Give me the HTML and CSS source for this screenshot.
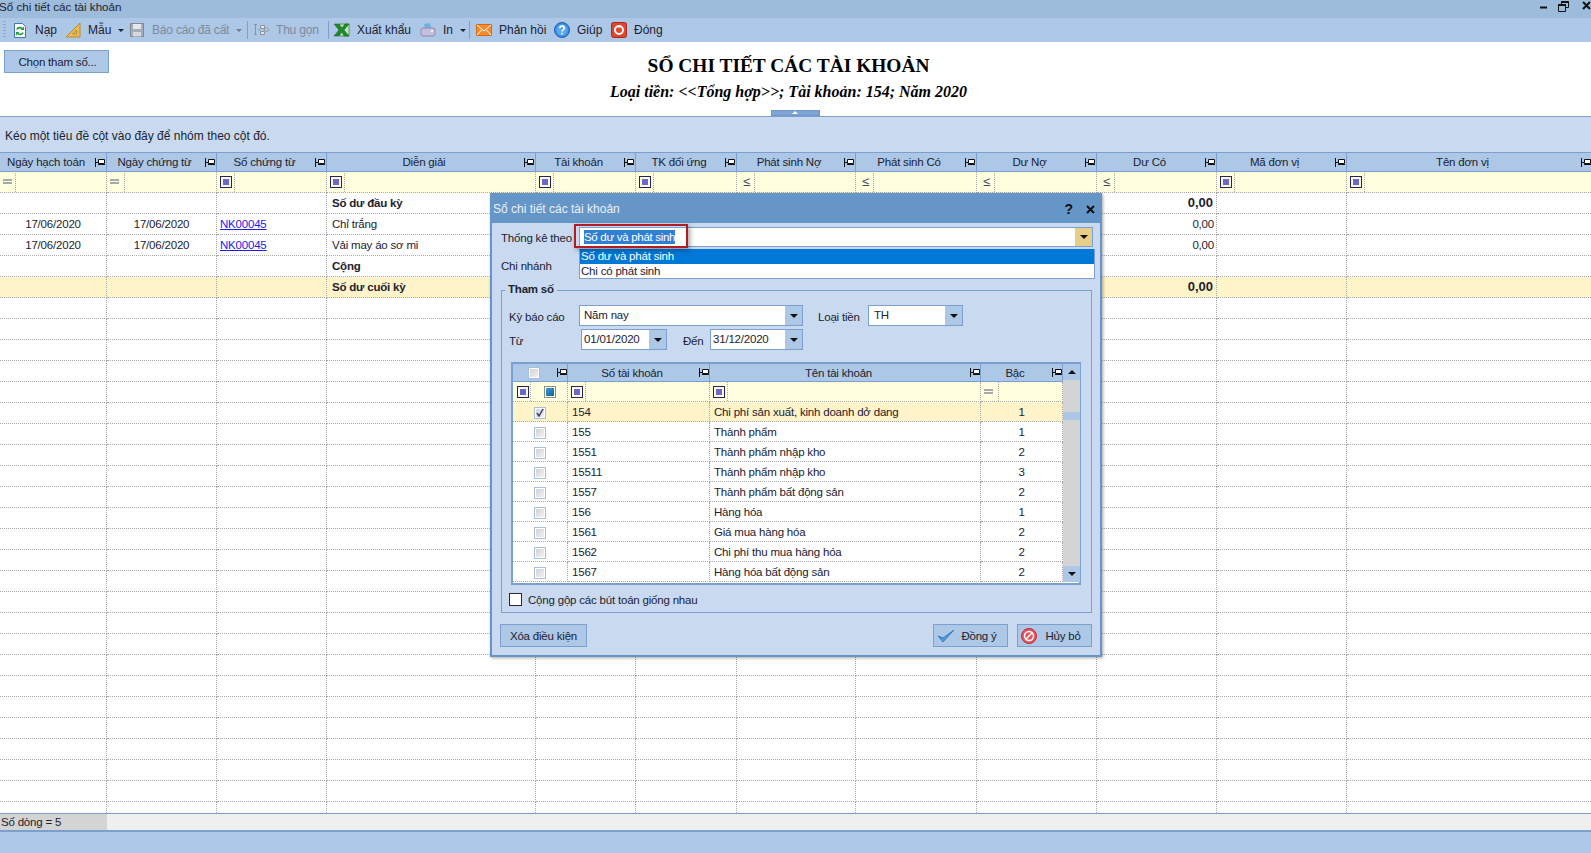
FILE: index.html
```html
<!DOCTYPE html>
<html lang="vi">
<head>
<meta charset="utf-8">
<title>Sổ chi tiết các tài khoản</title>
<link rel="stylesheet" href="styles.css">
</head>
<body>
<svg class="defs" width="0" height="0" aria-hidden="true">
  <symbol id="pin" viewBox="0 0 10 9"><path d="M.5 0v9M.5 4.500H3.500" stroke="#111" fill="none"/><path d="M3.500 1.500h6v4h-6z" fill="#fff" stroke="#111"/><path d="M3 6.500h7" stroke="#111"/></symbol>
  <symbol id="eq" viewBox="0 0 9 6"><path d="M0 1h9M0 4h9" stroke="#4c5570" fill="none"/></symbol>
</svg>

<header class="titlebar">
  <span class="app-title">Sổ chi tiết các tài khoản</span>
  <div class="winctl">
    <svg width="9" height="12" viewBox="0 0 9 12"><path d="M1 6.500h7" stroke="#111" stroke-width="2"/></svg>
    <svg width="11" height="11" viewBox="0 0 11 11"><path d="M3.500 3V.5h7v6H8M.5 3.500h7v7h-7z" fill="none" stroke="#111"/><path d="M.5 4h7M3.500 1h7" stroke="#111" stroke-width="2"/></svg>
    <svg width="9" height="9" viewBox="0 0 9 9"><path d="M1 1l7 7M8 1L1 8" stroke="#111" stroke-width="2"/></svg>
  </div>
</header>

<nav class="toolbar">
  <span class="grip"></span>
  <div class="tool tool-nap"><svg width="14" height="17" viewBox="0 0 14 17"><path d="M1.500 1.500h8l3 3v11h-11z" fill="#fff" stroke="#3f74ad"/><path d="M4 7.500a3 3 0 0 1 5-1" fill="none" stroke="#1f9a3a" stroke-width="1.700"/><path d="M7.500 8h3.500V4.500z" fill="#1f9a3a"/><path d="M10 10.500a3 3 0 0 1-5 1" fill="none" stroke="#1f9a3a" stroke-width="1.700"/><path d="M6.500 10H3v3.500z" fill="#1f9a3a"/></svg><span>Nạp</span></div>
  <div class="tool"><svg width="16" height="16" viewBox="0 0 16 16"><path d="M15 1v14H1z" fill="#eebc4e" stroke="#b98a2c"/><path d="M11.500 8v4H7.500z" fill="#adc7e6" stroke="#b98a2c"/></svg><span>Mẫu</span><i class="caret"></i></div>
  <div class="tool off"><svg width="16" height="16" viewBox="0 0 16 16"><path d="M1.500 1.500h13v13h-13z" fill="#a4adb8" stroke="#7e8792"/><path d="M4 2h8v5H4z" fill="#e6e8eb"/><path d="M4 10h8v4.500H4z" fill="#d5d8dc"/></svg><span>Báo cáo đã cất</span><i class="caret"></i></div>
  <span class="sep"></span>
  <div class="tool off"><svg width="16" height="16" viewBox="0 0 16 16"><path d="M1 2h3v1H3v9h1v1H1v-1h1V3H1z" fill="#8b949e"/><path d="M7.500 3.500h4v3h-4zM7.500 9.500h4v3h-4zM12 6h3v3h-3zM5 8h2.500M11.500 7.500h.5" fill="#dfe3e8" stroke="#8b949e"/></svg><span>Thu gọn</span></div>
  <span class="sep"></span>
  <div class="tool"><svg width="16" height="16" viewBox="0 0 16 16"><path d="M5 2h10v12H5z" fill="#c9e4c4" stroke="#5b9a55"/><path d="M0 2h5l3 4 3-4h4l-5 6 5 6h-5l-2-4-3 4H0l5-6z" fill="#1f8a2e" stroke="#0f5f1b" stroke-width=".5"/></svg><span>Xuất khẩu</span></div>
  <div class="tool"><svg width="16" height="16" viewBox="0 0 16 16"><path d="M4 2l6-1 1 5H5z" fill="#6fb1e8"/><path d="M1 8q0-2 2-2h10q2 0 2 2v4q0 2-2 2H3q-2 0-2-2z" fill="#c4bfdc" stroke="#8d88ad"/><circle cx="12" cy="9" r="1" fill="#fff"/></svg><span>In</span><i class="caret"></i></div>
  <span class="sep"></span>
  <div class="tool"><svg width="16" height="16" viewBox="0 0 16 16"><path d="M.5 2.500h15v11H.5z" fill="#f58a2c" stroke="#d76a10"/><path d="M1 3l7 6 7-6M1 13l5-5.500M15 13l-5-5.500" fill="none" stroke="#fff"/></svg><span>Phản hồi</span></div>
  <div class="tool"><svg width="16" height="16" viewBox="0 0 16 16"><circle cx="8" cy="8" r="7.500" fill="#3b8de0" stroke="#1d5fae"/><circle cx="8" cy="8" r="5.500" fill="#5aa8ef"/><path d="M5.800 6.200c0-3 4.500-3 4.500-.2 0 1.800-2.300 1.800-2.300 3.500" fill="none" stroke="#fff" stroke-width="1.600"/><path d="M7.200 10.800h1.600v1.600H7.200z" fill="#fff"/></svg><span>Giúp</span></div>
  <div class="tool"><svg width="16" height="16" viewBox="0 0 16 16"><rect x=".5" y=".5" width="15" height="15" rx="2" fill="#e2452f" stroke="#a82a18"/><circle cx="8" cy="8" r="4" fill="none" stroke="#fff" stroke-width="2"/><path d="M8 3v3" stroke="#fff"/></svg><span>Đóng</span></div>
</nav>

<section class="report-head">
  <div class="report-left"><button class="btn choose" type="button">Chọn tham số...</button></div>
  <div class="report-title">
    <h1>SỔ CHI TIẾT CÁC TÀI KHOẢN</h1>
    <p>Loại tiền: &lt;&lt;Tổng hợp&gt;&gt;; Tài khoản: 154; Năm 2020</p>
  </div>
  <span class="collapse"></span>
</section>

<div class="group-panel">Kéo một tiêu đề cột vào đây để nhóm theo cột đó.</div>

<main class="grid-wrap">
<table class="grid">
  <colgroup>
    <col class="c107"><col class="c110"><col class="c110"><col class="c209"><col class="c100"><col class="c101"><col class="c119"><col class="c121"><col class="c120"><col class="c120"><col class="c130"><col class="c246">
  </colgroup>
  <thead>
    <tr>
      <th><div class="hd"><span>Ngày hạch toán</span><svg><use href="#pin"/></svg></div></th>
      <th><div class="hd"><span>Ngày chứng từ</span><svg><use href="#pin"/></svg></div></th>
      <th><div class="hd"><span>Số chứng từ</span><svg><use href="#pin"/></svg></div></th>
      <th><div class="hd"><span>Diễn giải</span><svg><use href="#pin"/></svg></div></th>
      <th><div class="hd"><span>Tài khoản</span><svg><use href="#pin"/></svg></div></th>
      <th><div class="hd"><span>TK đối ứng</span><svg><use href="#pin"/></svg></div></th>
      <th><div class="hd"><span>Phát sinh Nợ</span><svg><use href="#pin"/></svg></div></th>
      <th><div class="hd"><span>Phát sinh Có</span><svg><use href="#pin"/></svg></div></th>
      <th><div class="hd"><span>Dư Nợ</span><svg><use href="#pin"/></svg></div></th>
      <th><div class="hd"><span>Dư Có</span><svg><use href="#pin"/></svg></div></th>
      <th><div class="hd"><span>Mã đơn vị</span><svg><use href="#pin"/></svg></div></th>
      <th><div class="hd"><span>Tên đơn vị</span><svg><use href="#pin"/></svg></div></th>
    </tr>
    <tr class="filter">
      <td><span class="op"><svg class="eq"><use href="#eq"/></svg></span></td>
      <td><span class="op"><svg class="eq"><use href="#eq"/></svg></span></td>
      <td><span class="op"><i class="fbox"></i></span></td>
      <td><span class="op"><i class="fbox"></i></span></td>
      <td><span class="op"><i class="fbox"></i></span></td>
      <td><span class="op"><i class="fbox"></i></span></td>
      <td><span class="op le">≤</span></td>
      <td><span class="op le">≤</span></td>
      <td><span class="op le">≤</span></td>
      <td><span class="op le">≤</span></td>
      <td><span class="op"><i class="fbox"></i></span></td>
      <td><span class="op"><i class="fbox"></i></span></td>
    </tr>
  </thead>
  <tbody>
    <tr class="strong"><td></td><td></td><td></td><td>Số dư đầu kỳ</td><td></td><td></td><td></td><td></td><td></td><td class="num">0,00</td><td></td><td></td></tr>
    <tr><td class="ctr">17/06/2020</td><td class="ctr">17/06/2020</td><td class="doc"><a href="#">NK00045</a></td><td>Chỉ trắng</td><td></td><td></td><td></td><td></td><td></td><td class="num">0,00</td><td></td><td></td></tr>
    <tr><td class="ctr">17/06/2020</td><td class="ctr">17/06/2020</td><td class="doc"><a href="#">NK00045</a></td><td>Vải may áo sơ mi</td><td></td><td></td><td></td><td></td><td></td><td class="num">0,00</td><td></td><td></td></tr>
    <tr class="strong"><td></td><td></td><td></td><td>Cộng</td><td></td><td></td><td></td><td></td><td></td><td></td><td></td><td></td></tr>
    <tr class="strong total"><td></td><td></td><td></td><td>Số dư cuối kỳ</td><td></td><td></td><td></td><td></td><td></td><td class="num">0,00</td><td></td><td></td></tr>
    <tr><td></td><td></td><td></td><td></td><td></td><td></td><td></td><td></td><td></td><td></td><td></td><td></td></tr>
    <tr><td></td><td></td><td></td><td></td><td></td><td></td><td></td><td></td><td></td><td></td><td></td><td></td></tr>
    <tr><td></td><td></td><td></td><td></td><td></td><td></td><td></td><td></td><td></td><td></td><td></td><td></td></tr>
    <tr><td></td><td></td><td></td><td></td><td></td><td></td><td></td><td></td><td></td><td></td><td></td><td></td></tr>
    <tr><td></td><td></td><td></td><td></td><td></td><td></td><td></td><td></td><td></td><td></td><td></td><td></td></tr>
    <tr><td></td><td></td><td></td><td></td><td></td><td></td><td></td><td></td><td></td><td></td><td></td><td></td></tr>
    <tr><td></td><td></td><td></td><td></td><td></td><td></td><td></td><td></td><td></td><td></td><td></td><td></td></tr>
    <tr><td></td><td></td><td></td><td></td><td></td><td></td><td></td><td></td><td></td><td></td><td></td><td></td></tr>
    <tr><td></td><td></td><td></td><td></td><td></td><td></td><td></td><td></td><td></td><td></td><td></td><td></td></tr>
    <tr><td></td><td></td><td></td><td></td><td></td><td></td><td></td><td></td><td></td><td></td><td></td><td></td></tr>
    <tr><td></td><td></td><td></td><td></td><td></td><td></td><td></td><td></td><td></td><td></td><td></td><td></td></tr>
    <tr><td></td><td></td><td></td><td></td><td></td><td></td><td></td><td></td><td></td><td></td><td></td><td></td></tr>
    <tr><td></td><td></td><td></td><td></td><td></td><td></td><td></td><td></td><td></td><td></td><td></td><td></td></tr>
    <tr><td></td><td></td><td></td><td></td><td></td><td></td><td></td><td></td><td></td><td></td><td></td><td></td></tr>
    <tr><td></td><td></td><td></td><td></td><td></td><td></td><td></td><td></td><td></td><td></td><td></td><td></td></tr>
    <tr><td></td><td></td><td></td><td></td><td></td><td></td><td></td><td></td><td></td><td></td><td></td><td></td></tr>
    <tr><td></td><td></td><td></td><td></td><td></td><td></td><td></td><td></td><td></td><td></td><td></td><td></td></tr>
    <tr><td></td><td></td><td></td><td></td><td></td><td></td><td></td><td></td><td></td><td></td><td></td><td></td></tr>
    <tr><td></td><td></td><td></td><td></td><td></td><td></td><td></td><td></td><td></td><td></td><td></td><td></td></tr>
    <tr><td></td><td></td><td></td><td></td><td></td><td></td><td></td><td></td><td></td><td></td><td></td><td></td></tr>
    <tr><td></td><td></td><td></td><td></td><td></td><td></td><td></td><td></td><td></td><td></td><td></td><td></td></tr>
    <tr><td></td><td></td><td></td><td></td><td></td><td></td><td></td><td></td><td></td><td></td><td></td><td></td></tr>
    <tr><td></td><td></td><td></td><td></td><td></td><td></td><td></td><td></td><td></td><td></td><td></td><td></td></tr>
    <tr><td></td><td></td><td></td><td></td><td></td><td></td><td></td><td></td><td></td><td></td><td></td><td></td></tr>
    <tr><td></td><td></td><td></td><td></td><td></td><td></td><td></td><td></td><td></td><td></td><td></td><td></td></tr>
  </tbody>
</table>
</main>

<div class="statusbar"><span class="count">Số dòng = 5</span></div>
<footer class="bottom"></footer>

<div class="dialog">
  <div class="dlg-title">
    <span>Sổ chi tiết các tài khoản</span>
    <b class="dlg-help">?</b>
    <svg class="dlg-x" width="9" height="9" viewBox="0 0 9 9"><path d="M1 1l7 7M8 1L1 8" stroke="#111" stroke-width="2"/></svg>
  </div>
  <div class="dlg-body">
    <div class="row first"><label class="l78">Thống kê theo</label>
      <div class="combo w514"><span class="val"><span class="sel">Số dư và phát sinh</span></span><span class="drop active"><i class="caret big"></i></span></div>
    </div>
    <div class="row second"><label class="l78">Chi nhánh</label></div>

    <fieldset class="params">
      <legend>Tham số</legend>
      <div class="row"><label class="l69">Kỳ báo cáo</label>
        <div class="combo w224"><span class="val">Năm nay</span><span class="drop"><i class="caret big"></i></span></div>
        <label class="l-loai">Loại tiền</label>
        <div class="combo w95"><span class="val">TH</span><span class="drop"><i class="caret big"></i></span></div>
      </div>
      <div class="row mt3"><label class="l71">Từ</label>
        <div class="combo w86"><span class="val">01/01/2020</span><span class="drop"><i class="caret big"></i></span></div>
        <label class="l-den">Đến</label>
        <div class="combo w93"><span class="val">31/12/2020</span><span class="drop"><i class="caret big"></i></span></div>
      </div>

      <div class="acct">
        <table class="acct-table">
          <colgroup><col class="a55"><col class="a142"><col class="a271"><col class="a82"></colgroup>
          <thead>
            <tr>
              <th><div class="hd"><span class="hc"><i class="cb"></i></span><svg><use href="#pin"/></svg></div></th>
              <th><div class="hd"><span>Số tài khoản</span><svg><use href="#pin"/></svg></div></th>
              <th><div class="hd"><span>Tên tài khoản</span><svg><use href="#pin"/></svg></div></th>
              <th><div class="hd"><span>Bậc</span><svg><use href="#pin"/></svg></div></th>
            </tr>
            <tr class="filter">
              <td><span class="op"><i class="fbox"></i></span><i class="gbox"></i></td>
              <td><span class="op"><i class="fbox"></i></span></td>
              <td><span class="op"><i class="fbox"></i></span></td>
              <td><span class="op"><svg class="eq"><use href="#eq"/></svg></span></td>
            </tr>
          </thead>
          <tbody>
            <tr class="total"><td class="ctr"><i class="cb on"><svg width="10" height="10" viewBox="0 0 10 10"><path d="M2 5l2 3 4-7" fill="none" stroke="#34466e" stroke-width="1.500"/></svg></i></td><td>154</td><td>Chi phí sản xuất, kinh doanh dở dang</td><td class="ctr">1</td></tr>
            <tr><td class="ctr"><i class="cb"></i></td><td>155</td><td>Thành phẩm</td><td class="ctr">1</td></tr>
            <tr><td class="ctr"><i class="cb"></i></td><td>1551</td><td>Thành phẩm nhập kho</td><td class="ctr">2</td></tr>
            <tr><td class="ctr"><i class="cb"></i></td><td>15511</td><td>Thành phẩm nhập kho</td><td class="ctr">3</td></tr>
            <tr><td class="ctr"><i class="cb"></i></td><td>1557</td><td>Thành phẩm bất động sản</td><td class="ctr">2</td></tr>
            <tr><td class="ctr"><i class="cb"></i></td><td>156</td><td>Hàng hóa</td><td class="ctr">1</td></tr>
            <tr><td class="ctr"><i class="cb"></i></td><td>1561</td><td>Giá mua hàng hóa</td><td class="ctr">2</td></tr>
            <tr><td class="ctr"><i class="cb"></i></td><td>1562</td><td>Chi phí thu mua hàng hóa</td><td class="ctr">2</td></tr>
            <tr><td class="ctr"><i class="cb"></i></td><td>1567</td><td>Hàng hóa bất động sản</td><td class="ctr">2</td></tr>
          </tbody>
        </table>
        <div class="vscroll">
          <span class="sbtn"><i class="caret up"></i></span>
          <span class="strack"><i class="thumb"></i></span>
          <span class="sbtn"><i class="caret big"></i></span>
        </div>
      </div>

      <div class="check-row"><i class="plain-cb"></i><span>Cộng gộp các bút toán giống nhau</span></div>
    </fieldset>

    <div class="actions">
      <button class="btn clear" type="button">Xóa điều kiện</button>
      <div class="act-right">
        <button class="btn act ok" type="button"><svg width="18" height="16" viewBox="0 0 18 16"><path d="M1 8l5 6L17 2 6 10z" fill="#4f9ae0" stroke="#2a6fb8" stroke-width=".8"/></svg><span>Đồng ý</span></button>
        <button class="btn act" type="button"><svg width="16" height="16" viewBox="0 0 16 16"><circle cx="8" cy="8" r="7.500" fill="#e8545c" stroke="#c02a32"/><circle cx="8" cy="8" r="4.500" fill="none" stroke="#fff" stroke-width="1.500"/><path d="M4.800 11.200l6.400-6.400" stroke="#fff" stroke-width="1.500"/></svg><span>Hủy bỏ</span></button>
      </div>
    </div>
  </div>

  <ul class="dropdown">
    <li class="hot">Số dư và phát sinh</li>
    <li>Chi có phát sinh</li>
  </ul>
  <span class="callout"></span>
</div>
</body>
</html>
```

FILE: styles.css
```css
* { box-sizing: border-box; }
html, body { height: 100%; }
body {
  margin: 0;
  width: 1591px;
  height: 853px;
  overflow: hidden;
  position: relative;
  display: flex;
  flex-direction: column;
  background: #fff;
  color: #1b2230;
  font: 11.5px/14px "Liberation Sans", Arial, sans-serif;
  letter-spacing: -.2px;
}
.defs { position: absolute; }
i { display: block; font-style: normal; }

/* window chrome */
.titlebar {
  height: 18px;
  flex: none;
  background: #9dbbdb;
  display: flex;
  justify-content: space-between;
  align-items: center;
  font-size: 11.6px;
  letter-spacing: 0;
}
.app-title { margin: -5px 0 0 -1px; }
.winctl { display: flex; align-items: flex-start; height: 18px; padding-top: 1px; }
.winctl svg:nth-child(1) { margin-right: 10px; }
.winctl svg:nth-child(2) { margin-right: 13px; }

.toolbar {
  height: 24px;
  flex: none;
  background: #adc7e6;
  display: grid;
  grid-template-columns: 13px 52px 64px 118px 6px 75px 6px 86px 49px 7px 78px 57px 60px;
  align-items: center;
  font-size: 12px;
  letter-spacing: 0;
}
.grip {
  width: 3px;
  height: 18px;
  margin-left: 3px;
  background: repeating-linear-gradient(#8aa6c8 0 1px, transparent 1px 3px);
}
.tool { display: flex; align-items: center; gap: 7px; height: 24px; white-space: nowrap; }
.tool svg { flex: none; }
.tool.off { color: #7d8a9b; }
.tool.off span { letter-spacing: -.2px; }
.tool-nap { gap: 8px; }
.tool .caret { margin-left: auto; margin-right: 5px; }
.tool.off .caret { margin-right: 7px; }
.sep { width: 1px; height: 18px; background: #7b9fcf; }
.caret {
  width: 0;
  height: 0;
  border-left: 3px solid transparent;
  border-right: 3px solid transparent;
  border-top: 3px solid #1b2230;
}
.tool.off .caret { border-top-color: #6e7b8c; }
.caret.big { border-left-width: 4px; border-right-width: 4px; border-top-width: 4px; border-top-color: #111; }
.caret.up { border-left-width: 4px; border-right-width: 4px; border-top: 0; border-bottom: 4px solid #111; }

/* report header */
.report-head {
  height: 75px;
  flex: none;
  position: relative;
  display: grid;
  grid-template-columns: 1fr auto 1fr;
  border-bottom: 1px solid #7b9fcf;
}
.btn {
  font: inherit;
  letter-spacing: inherit;
  color: inherit;
  background: #adc7e6;
  border: 1px solid #7b9fcf;
  padding: 0;
  height: 23px;
}
.choose { width: 105px; margin: 8px 0 0 4px; padding-left: 2px; }
.report-title {
  text-align: center;
  font-family: "Liberation Serif", "Times New Roman", serif;
  letter-spacing: 0;
  color: #000;
  padding-top: 12px;
  margin-right: 14px;
}
.report-title h1 { margin: 0; font-size: 19.4px; line-height: 24px; font-weight: bold; }
.report-title p { margin: 2px 0 0; font-size: 16px; line-height: 24px; font-weight: bold; font-style: italic; }
.collapse {
  position: absolute;
  left: 771px;
  bottom: 0;
  width: 49px;
  height: 6px;
  background: #7fa5d6;
  border: 1px solid #6f97cc;
}
.collapse::after {
  content: "";
  position: absolute;
  left: 20px;
  top: 0;
  border-left: 3px solid transparent;
  border-right: 3px solid transparent;
  border-bottom: 3px solid #fff;
}

.group-panel {
  height: 35px;
  flex: none;
  background: #c9daf0;
  padding: 12px 0 0 5px;
  font-size: 12px;
  letter-spacing: 0;
}

/* main grid */
.grid-wrap { flex: none; height: 661px; overflow: hidden; }
table { border-collapse: separate; border-spacing: 0; table-layout: fixed; }
.grid { width: 1593px; }
.c107 { width: 107px; } .c110 { width: 110px; } .c209 { width: 209px; } .c100 { width: 100px; }
.c101 { width: 101px; } .c119 { width: 119px; } .c121 { width: 121px; } .c120 { width: 120px; }
.c130 { width: 130px; } .c246 { width: 246px; }

th {
  height: 20px;
  padding: 0;
  font-weight: normal;
  background: #adc7e6;
  border-top: 1px solid #7b9fcf;
  border-bottom: 1px solid #7b9fcf;
  border-right: 1px solid #7b9fcf;
}
.hd { display: flex; align-items: center; height: 18px; padding-right: 1px; }
.hd span { flex: 1; text-align: center; white-space: nowrap; overflow: hidden; padding-right: 3px; }
.hd svg { flex: none; width: 10px; height: 9px; }
.hc { display: flex; justify-content: center; }

.grid td, .acct-table td {
  padding: 0 4px 1px 5px;
  border-right: 1px dotted #a9a9a9;
  border-bottom: 1px dotted #a9a9a9;
  white-space: nowrap;
  overflow: hidden;
}
.grid td { height: 21px; }
.filter td { padding: 0; background: #ffffdf; }
.op {
  display: flex;
  align-items: center;
  padding-left: 3px;
  width: 18px;
  height: 19px;
  border-right: 1px dotted #a9a9a9;
}
.grid td:first-child .op { width: 16px; }
.fbox { width: 12px; height: 12px; border: 1px solid #23235f; background: #6a68cf; box-shadow: inset 0 0 0 2px #ffffdf; }
.eq { width: 9px; height: 6px; }
.grid .filter td, .acct-table .filter td { padding: 0; }
.le { color: #3e4660; font-size: 13px; line-height: 14px; padding-left: 6px; }
.ctr { text-align: center; }
.grid .ctr { padding: 0 0 1px; }
.grid td.doc { padding-left: 3px; }
.num { text-align: right; }
.grid td.num { padding-right: 2px; }
.strong td { font-weight: bold; }
.strong td.num { font-size: 13px; letter-spacing: 0; padding-right: 3px; }
.total td { background: #fff3c9; }
a { color: #1a1ae6; }

.statusbar {
  height: 19px;
  flex: none;
  background: #efefef;
  border-top: 1px solid #7b9fcf;
  border-bottom: 2px solid #7b9fcf;
}
.count { display: block; width: 107px; height: 16px; background: #d4d4d4; padding-left: 1px; line-height: 16px; }
.bottom { flex: 1; background: #adc7e6; }

/* dialog */
.dialog {
  position: absolute;
  left: 490px;
  top: 193px;
  width: 612px;
  height: 464px;
  border: 2px solid #6596c7;
  background: #c9daf0;
  box-shadow: 1px 1px 3px rgba(0, 0, 0, .35);
}
.dlg-title {
  height: 28px;
  background: #6596c7;
  color: #eaf1fa;
  display: flex;
  align-items: center;
  padding: 0 5px 0 1px;
  font-size: 12px;
  letter-spacing: 0;
}
.dlg-title > span { flex: 1; }
.dlg-help { color: #111; font-size: 14px; margin-right: 13px; }
.dlg-body { padding: 4px 8px 0; }
.row { display: flex; align-items: center; height: 21px; }
.row.first { height: 20px; margin-left: 1px; }
.row.first label { padding-top: 2px; }
.row.second { height: 20px; margin: 9px 0 0 1px; }
.params .row label { padding-top: 3px; }
.mt3 { margin-top: 3px; }
.l78 { width: 78px; flex: none; }
.l69 { width: 70px; margin-left: -1px; flex: none; }
.l71 { width: 72px; margin-left: -1px; flex: none; }
.l-loai { width: 50px; margin-left: 15px; flex: none; }
.l-den { width: 27px; margin-left: 16px; flex: none; }
.combo {
  display: flex;
  height: 100%;
  flex: none;
  background: #fff;
  border: 1px solid #7b9fcf;
}
.w514 { width: 514px; } .w224 { width: 224px; } .w95 { width: 95px; } .w86 { width: 86px; } .w93 { width: 93px; }
.val { flex: 1; padding: 1px 0 0 4px; overflow: hidden; white-space: nowrap; line-height: 16px; }
.w86 .val, .w93 .val { padding-left: 2px; }
.w95 .val { padding-left: 5px; }
.sel { background: #2f7fd6; color: #fff; padding: 1px 0; letter-spacing: -.3px; }
.drop { width: 17px; flex: none; background: #adc7e6; display: flex; align-items: center; justify-content: center; }
.drop.active { background: #e6cd88; }

.params {
  margin: 6px 0 0 1px;
  padding: 7px 0 0 8px;
  width: 591px;
  height: 331px;
  border: 1px solid #7b9fcf;
  min-width: 0;
}
.params legend { padding: 0 3px 2px; margin-left: -5px; font-weight: bold; line-height: 14px; }

.acct {
  display: flex;
  margin: 12px 0 0 1px;
  width: 570px;
  height: 223px;
  border: 2px solid #7b9fcf;
  background: #fff;
}
.acct-table { width: 550px; flex: none; align-self: flex-start; }
.a55 { width: 55px; } .a142 { width: 142px; } .a271 { width: 271px; } .a82 { width: 82px; }
.acct-table th { height: 18px; border-top: 0; }
.acct-table .hd { height: 17px; padding-right: 0; }
.acct-table td { height: 20px; padding: 1px 4px 0 4px; }
.acct-table .filter td { background: #ffffdf; }
.acct-table .ctr { padding: 1px 0 0; }
.acct-table .filter td:first-child { display: flex; align-items: center; }
.acct-table .filter td:first-child .op { padding-left: 4px; }
.gbox { width: 12px; height: 12px; margin-left: 13px; border: 1px solid #8d8d8d; background: linear-gradient(135deg, #3fa5d8, #0c5a86); box-shadow: inset 0 0 0 1px #fff; }
.cb {
  display: inline-block;
  position: relative;
  width: 12px;
  height: 12px;
  vertical-align: middle;
  border: 1px solid #a6bfe0;
  background: linear-gradient(135deg, #cfcfcf, #f4f4f4);
  box-shadow: inset 0 0 0 1px #fff;
}
.cb svg { position: absolute; left: 0; top: 0; }
.vscroll { width: 17px; flex: none; display: flex; flex-direction: column; height: 218px; background: #d4d4d4; }
.sbtn { height: 16px; flex: none; background: #adc7e6; display: flex; align-items: center; justify-content: center; }
.strack { flex: 1; padding-top: 32px; }
.thumb { height: 8px; background: #adc7e6; }

.check-row { display: flex; align-items: center; gap: 6px; margin: 8px 0 0 -1px; height: 13px; }
.plain-cb { width: 13px; height: 13px; background: #fff; border: 1px solid #2b2b2b; }

.actions { display: flex; justify-content: space-between; margin-top: 11px; }
.clear { width: 87px; }
.act-right { display: flex; gap: 9px; }
.act { width: 75px; display: flex; align-items: center; gap: 7px; padding-left: 3px; }
.act span { flex: 1; text-align: center; padding-right: 9px; white-space: nowrap; }
.act.ok { gap: 4px; }
.act.ok span { padding-right: 8px; }

.dropdown {
  position: absolute;
  left: 87px;
  top: 54px;
  width: 516px;
  height: 30px;
  margin: 0;
  padding: 0;
  list-style: none;
  background: #fff;
  border: 1px solid #7b9fcf;
  border-top: 0;
}
.dropdown li { height: 15px; line-height: 15px; padding-left: 1px; }
.dropdown .hot { background: #0078d7; color: #fff; }
.callout {
  position: absolute;
  left: 82px;
  top: 29px;
  width: 114px;
  height: 24px;
  border: 2px solid #b01c22;
  box-shadow: 2px 2px 5px rgba(0, 0, 0, .35);
}
```
